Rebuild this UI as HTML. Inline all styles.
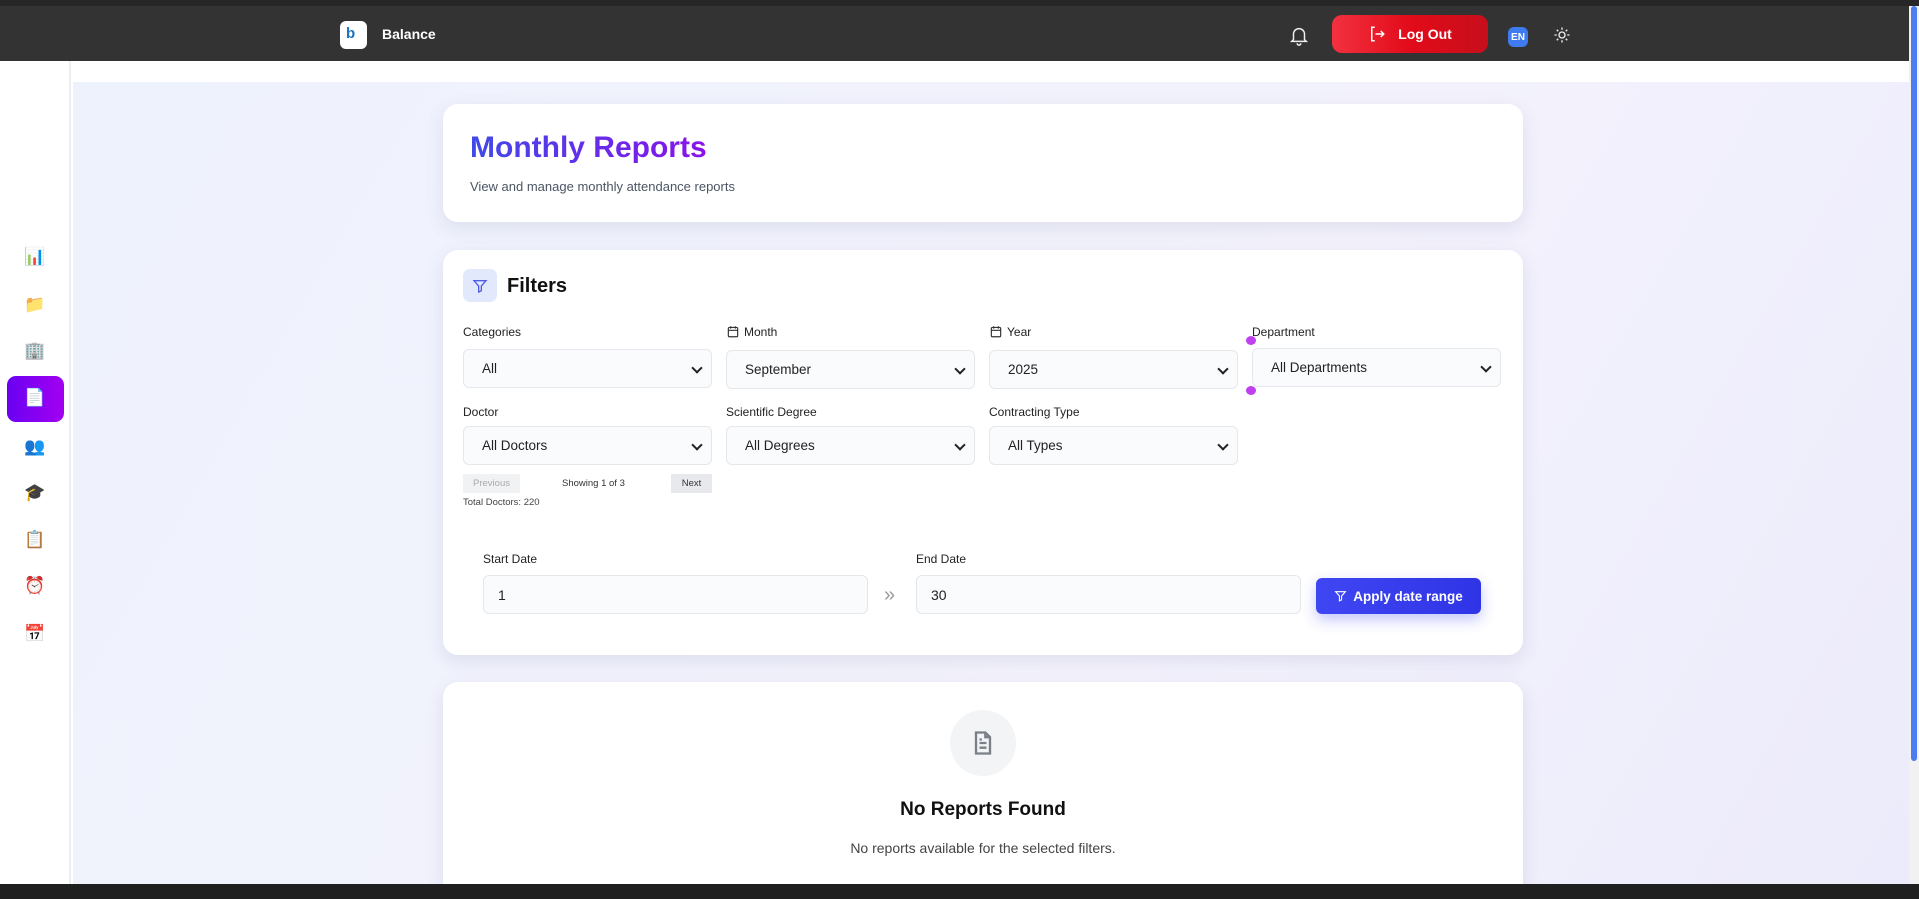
<!DOCTYPE html>
<html><head><meta charset="utf-8"><style>
*{box-sizing:border-box;margin:0;padding:0}
html,body{width:1919px;height:899px;overflow:hidden}
body{font-family:"Liberation Sans",sans-serif;background:#fff;position:relative}
.top0{position:absolute;left:0;top:0;width:1919px;height:6px;background:#262626}
.nav{position:absolute;left:0;top:6px;width:1909px;height:55px;background:#333;}
.logo{position:absolute;left:340px;top:15px;width:27px;height:28px;background:#fff;border-radius:6px}
.logo b{position:absolute;left:6px;top:4px;font-size:15px;color:#1e73be;font-weight:bold}
.brand{position:absolute;left:382px;top:20px;color:#fff;font-weight:bold;font-size:14px}
.logout{position:absolute;left:1332px;top:9px;width:156px;height:38px;border-radius:10px;background:linear-gradient(90deg,#f3313f,#e20b1a 50%,#c70e1b);color:#fff;font-weight:bold;font-size:14px;display:flex;align-items:center;justify-content:center;gap:12px}
.en{position:absolute;left:1508px;top:21px;width:20px;height:20px;border-radius:6px;background:#3f7bf0;color:#fff;font-size:10px;font-weight:bold;display:flex;align-items:center;justify-content:center}
.side{position:absolute;left:0;top:61px;width:71px;height:823px;background:#fff;border-right:2px solid #eceef4}
.main{position:absolute;left:73px;top:82px;width:1836px;height:802px;background:linear-gradient(120deg,#eef2fd,#f3f2fc 60%,#ecebfb)}
.scroll{position:absolute;left:1909px;top:6px;width:10px;height:878px;background:#f1f1f1}
.scroll div{position:absolute;left:2px;top:0;width:6px;height:755px;background:#4d7cf0;border-radius:3px}
.card{position:absolute;left:443px;width:1080px;background:#fff;border-radius:15px;box-shadow:0 6px 18px rgba(80,80,140,.12)}
h1{position:absolute;left:27px;top:27px;font-size:30px;font-weight:bold;background:linear-gradient(90deg,#3f4ae8,#8a12ea);-webkit-background-clip:text;color:transparent}
.sub{position:absolute;left:27px;top:75px;font-size:13px;color:#4b5563}
.lbl{position:absolute;font-size:12px;color:#222;display:flex;align-items:center;gap:4px}
.sel{position:absolute;height:39px;width:249px;background:#fafbfc;border:1px solid #e5e7eb;border-radius:6px;font-size:13.5px;color:#222;padding-left:18px;display:flex;align-items:center}
.sel:after{content:"";position:absolute;right:10px;top:14px;width:6px;height:6px;border-right:2px solid #222;border-bottom:2px solid #222;transform:rotate(45deg)}
.inp{position:absolute;height:39px;background:#fafbfc;border:1px solid #e5e7eb;border-radius:6px;font-size:14px;padding-left:14px;display:flex;align-items:center;color:#222}
.ic{position:absolute;left:24px;width:22px;text-align:center;font-size:17px}
</style></head><body>
<div class="top0"></div>
<div class="nav">
 <div class="logo"><b>b</b></div>
 <div class="brand">Balance</div>
 <svg style="position:absolute;left:1288px;top:17px" width="22" height="24" viewBox="0 0 24 24" fill="none" stroke="#eee" stroke-width="1.6"><path d="M6 17V11a6 6 0 0 1 12 0v6l2 2H4z"/><path d="M10 21a2 2 0 0 0 4 0"/></svg>
 <div class="logout"><svg width="18" height="20" viewBox="0 0 24 24" fill="none" stroke="#fff" stroke-width="2"><path d="M9 3H5v18h4"/><path d="M10 12h11M17 8l4 4-4 4"/></svg>Log Out</div>
 <div class="en">EN</div>
 <svg style="position:absolute;left:1553px;top:20px" width="18" height="18" viewBox="0 0 24 24" fill="none" stroke="#eee" stroke-width="1.8"><circle cx="12" cy="12" r="4"/><path d="M12 2v3M12 19v3M2 12h3M19 12h3M5 5l2 2M17 17l2 2M5 19l2-2M17 7l2-2"/></svg>
</div>
<div class="side">
 <div class="ic" style="top:186px">📊</div>
 <div class="ic" style="top:234px">📁</div>
 <div class="ic" style="top:280px">🏢</div>
 <div style="position:absolute;left:7px;top:315px;width:57px;height:46px;border-radius:9px;background:linear-gradient(90deg,#6a00f2,#a300f2)"></div>
 <div class="ic" style="top:327px">📄</div>
 <div class="ic" style="top:376px">👥</div>
 <div class="ic" style="top:422px">🎓</div>
 <div class="ic" style="top:469px">📋</div>
 <div class="ic" style="top:515px">⏰</div>
 <div class="ic" style="top:563px">📅</div>
</div>
<div class="main"></div>
<div class="scroll"><div></div></div>

<div class="card" style="top:104px;height:118px">
 <h1>Monthly Reports</h1>
 <div class="sub">View and manage monthly attendance reports</div>
</div>

<div class="card" style="top:250px;height:405px">
 <div style="position:absolute;left:20px;top:19px;width:34px;height:33px;border-radius:7px;background:#e3e9fd;display:flex;align-items:center;justify-content:center"><svg width="16" height="18" viewBox="0 0 24 24" fill="none" stroke="#4f5de8" stroke-width="2"><path d="M3 4h18l-7 8v7l-4 2v-9z"/></svg></div>
 <div style="position:absolute;left:64px;top:25px;font-size:20px;font-weight:bold;color:#111">Filters</div>
 <div class="lbl" style="left:20px;top:75px">Categories</div>
 <div class="lbl" style="left:283px;top:74px"><svg width="14" height="15" viewBox="0 0 24 24" fill="none" stroke="#333" stroke-width="2"><rect x="4" y="5" width="16" height="16" rx="2"/><path d="M4 10h16M8 3v4M16 3v4"/></svg>Month</div>
 <div class="lbl" style="left:546px;top:74px"><svg width="14" height="15" viewBox="0 0 24 24" fill="none" stroke="#333" stroke-width="2"><rect x="4" y="5" width="16" height="16" rx="2"/><path d="M4 10h16M8 3v4M16 3v4"/></svg>Year</div>
 <div class="lbl" style="left:809px;top:75px">Department</div>
 <div style="position:absolute;left:803px;top:86px;width:10px;height:9px;border-radius:50%;background:#c040f0"></div>
 <div style="position:absolute;left:803px;top:136px;width:10px;height:9px;border-radius:50%;background:#c040f0"></div>
 <div class="sel" style="left:20px;top:99px">All</div>
 <div class="sel" style="left:283px;top:100px">September</div>
 <div class="sel" style="left:546px;top:100px">2025</div>
 <div class="sel" style="left:809px;top:98px">All Departments</div>
 <div class="lbl" style="left:20px;top:155px">Doctor</div>
 <div class="lbl" style="left:283px;top:155px">Scientific Degree</div>
 <div class="lbl" style="left:546px;top:155px">Contracting Type</div>
 <div class="sel" style="left:20px;top:176px">All Doctors</div>
 <div class="sel" style="left:283px;top:176px">All Degrees</div>
 <div class="sel" style="left:546px;top:176px">All Types</div>
 <div style="position:absolute;left:20px;top:224px;width:57px;height:19px;background:#f1f2f4;color:#aaa;font-size:9.5px;display:flex;align-items:center;justify-content:center">Previous</div>
 <div style="position:absolute;left:119px;top:228px;font-size:9.5px;color:#333">Showing 1 of 3</div>
 <div style="position:absolute;left:228px;top:224px;width:41px;height:19px;background:#e8e9ec;color:#333;font-size:9.5px;display:flex;align-items:center;justify-content:center">Next</div>
 <div style="position:absolute;left:20px;top:247px;font-size:9.5px;color:#444">Total Doctors: 220</div>
 <div class="lbl" style="left:40px;top:302px">Start Date</div>
 <div class="lbl" style="left:473px;top:302px">End Date</div>
 <div class="inp" style="left:40px;top:325px;width:385px">1</div>
 <div style="position:absolute;left:441px;top:334px;font-size:20px;color:#999">»</div>
 <div class="inp" style="left:473px;top:325px;width:385px">30</div>
 <div style="position:absolute;left:873px;top:328px;width:165px;height:36px;border-radius:6px;background:linear-gradient(90deg,#3f46f2,#2f34e6);color:#fff;font-weight:bold;font-size:13.5px;display:flex;align-items:center;justify-content:center;gap:6px;box-shadow:0 6px 14px rgba(60,70,240,.3)"><svg width="13" height="14" viewBox="0 0 24 24" fill="none" stroke="#fff" stroke-width="2"><path d="M3 4h18l-7 8v7l-4 2v-9z"/></svg>Apply date range</div>
</div>

<div class="card" style="top:682px;height:202px;border-radius:15px 15px 0 0">
 <div style="position:absolute;left:507px;top:28px;width:66px;height:66px;border-radius:50%;background:#f3f4f6;display:flex;align-items:center;justify-content:center"><svg width="28" height="32" viewBox="0 0 24 24" fill="none" stroke="#7a7f88" stroke-width="2"><path d="M14 3H6v18h12V7z"/><path d="M14 3v4h4M9 12h6M9 16h6M9 9h2"/></svg></div>
 <div style="position:absolute;left:0;width:1080px;text-align:center;top:117px;font-size:19px;font-weight:bold;color:#111">No Reports Found</div>
 <div style="position:absolute;left:0;width:1080px;text-align:center;top:158px;font-size:14px;color:#444">No reports available for the selected filters.</div>
</div>
<div style="position:absolute;left:0;top:884px;width:1919px;height:15px;background:#1f1f1f"></div>
</body></html>
